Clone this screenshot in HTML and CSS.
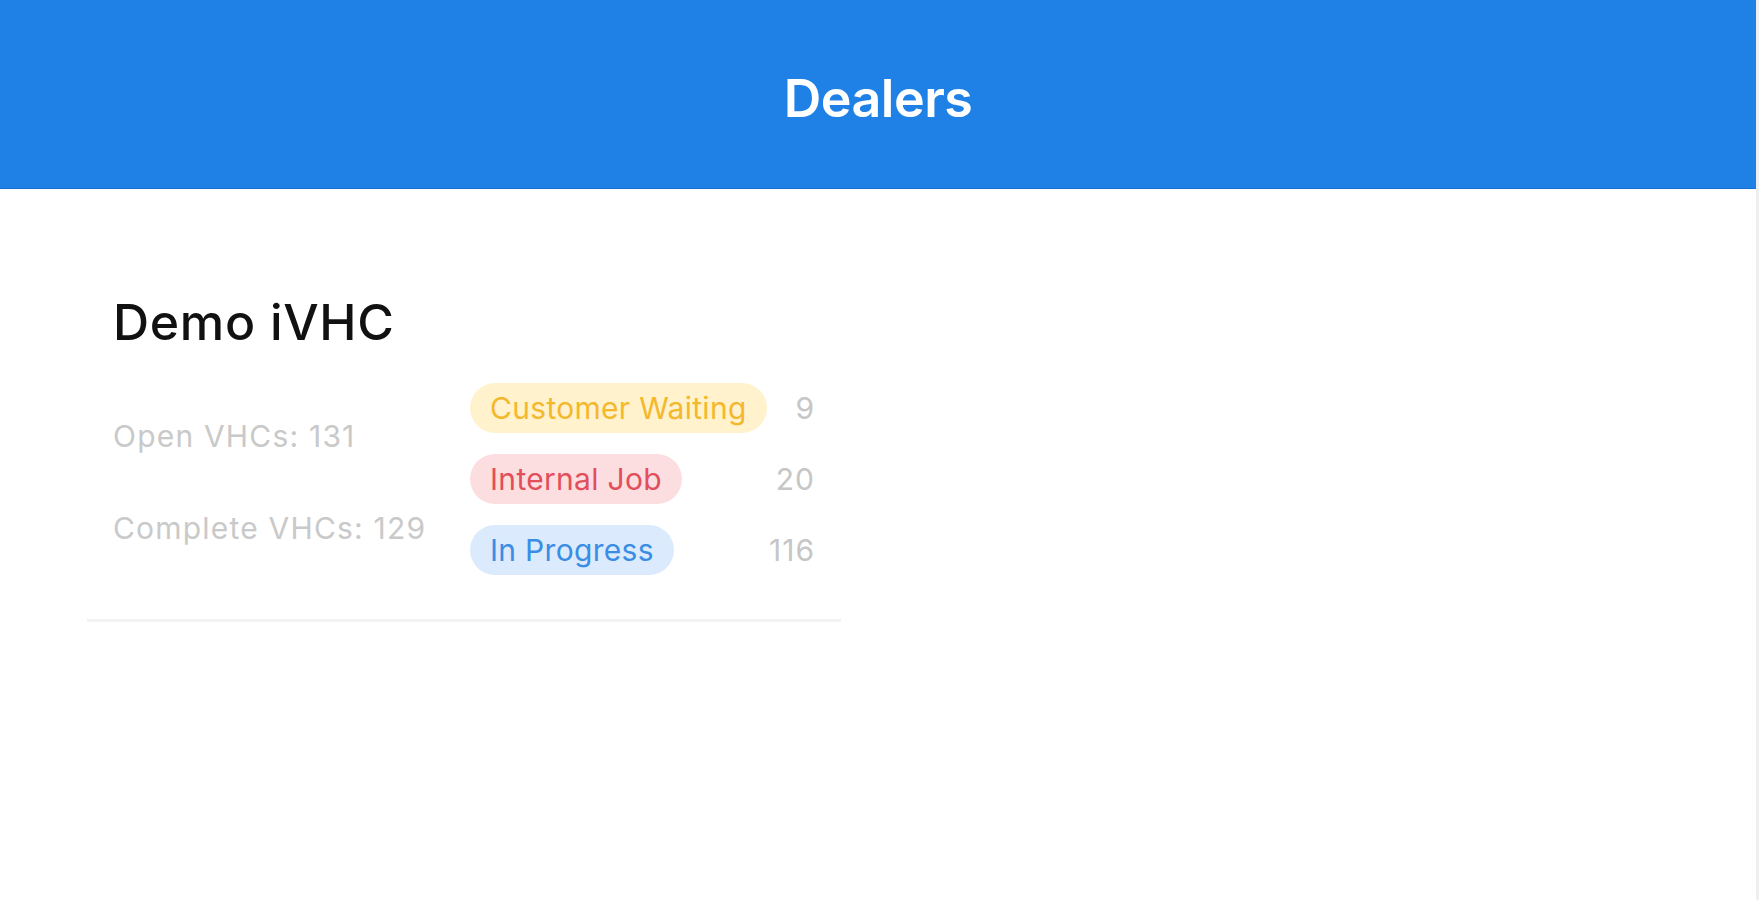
FILE: index.html
```html
<!DOCTYPE html>
<html lang="en">
<head>
    <meta charset="UTF-8">
    <meta name="viewport" content="width=device-width, initial-scale=1.0">
    <title>Dealers</title>
    <link rel="stylesheet" href="styles.css">
</head>
<body>
    <div class="screen">
        <header class="nav-bar">
            <h1>Dealers</h1>
        </header>

        <main class="dealer-list">
            <!-- One dealer -->
            <section class="dealer-card">
                <h2>Demo iVHC</h2>
                <div class="dealer-body">
                    <div class="totals">
                        <p>Open VHCs: 131</p>
                        <p>Complete VHCs: 129</p>
                    </div>
                    <div class="statuses">
                        <span class="pill waiting">Customer Waiting</span>
                        <span class="count">9</span>
                        <span class="pill internal">Internal Job</span>
                        <span class="count">20</span>
                        <span class="pill progress">In Progress</span>
                        <span class="count">116</span>
                    </div>
                </div>
            </section>
        </main>
    </div>
</body>
</html>
```

FILE: styles.css
```css
body {
    margin: 0;
    padding: 0;
    font-family: Inter, "Liberation Sans", Arial, sans-serif;
    background-color: #fff;
}
.screen {
    min-height: 100vh;
    border-right: 3px solid #efefef;
    box-sizing: border-box;
}
.nav-bar {
    height: 188px;
    background-color: #1f80e6;
    box-shadow: 0 1px 0 #1a70d2;
    display: flex;
    align-items: center;
    justify-content: center;
}
.nav-bar h1 {
    margin: 8px 0 0;
    color: #fff;
    font-size: 52px;
    font-weight: 600;
    letter-spacing: -0.5px;
}
.dealer-list {
    padding: 103px 0 0 87px;
}
.dealer-card {
    width: 754px;
    box-sizing: border-box;
    padding: 0 26px 44px;
    border-bottom: 3px solid #f2f2f2;
}
.dealer-card h2 {
    margin: 0 0 30px;
    font-size: 50px;
    line-height: 62px;
    font-weight: 500;
    color: #111;
    letter-spacing: 0.7px;
}
.dealer-body {
    display: flex;
}
.totals {
    width: 357px;
    padding-top: 6px;
    display: flex;
    flex-direction: column;
    justify-content: center;
    gap: 52px;
}
.totals p {
    margin: 0;
    font-size: 30px;
    line-height: 40px;
    color: #c9c9c9;
    letter-spacing: 1.2px;
    white-space: nowrap;
}
.statuses {
    width: 345px;
    display: grid;
    grid-template-columns: auto 1fr;
    align-items: center;
    row-gap: 21px;
}
.pill {
    justify-self: start;
    height: 50px;
    line-height: 50px;
    padding: 0 20px;
    border-radius: 25px;
    font-size: 30px;
    letter-spacing: 0.3px;
    white-space: nowrap;
}
.pill.waiting {
    background-color: #fff2cc;
    color: #f4b82c;
}
.pill.internal {
    background-color: #fcdde0;
    color: #e14f5b;
}
.pill.progress {
    background-color: #dbeafc;
    color: #3a8de4;
}
.count {
    text-align: right;
    font-size: 30px;
    letter-spacing: 1px;
    color: #c6c6c6;
}
```
